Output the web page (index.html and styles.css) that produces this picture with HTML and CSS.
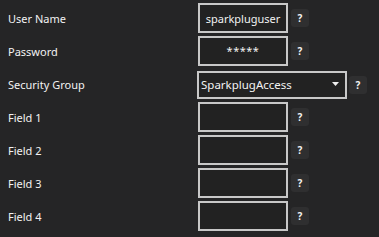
FILE: index.html
```html
<!DOCTYPE html>
<html>
<head>
<meta charset="utf-8">
<link rel="stylesheet" href="styles.css">
</head>
<body>
<div class="form">
  <div class="row">
    <div class="label">User Name</div>
    <div class="textbox">sparkpluguser</div>
    <div class="help">?</div>
  </div>
  <div class="row">
    <div class="label">Password</div>
    <div class="textbox pw">*****</div>
    <div class="help">?</div>
  </div>
  <div class="row">
    <div class="label">Security Group</div>
    <div class="select">
      <span class="select-text">SparkplugAccess</span>
      <svg class="arrow" width="7" height="4" viewBox="0 0 7 4"><path d="M0 0H7L3.5 4Z" fill="#f0f0f0"/></svg>
    </div>
    <div class="help help-sel">?</div>
  </div>
  <div class="row">
    <div class="label">Field 1</div>
    <div class="textbox"></div>
    <div class="help">?</div>
  </div>
  <div class="row">
    <div class="label">Field 2</div>
    <div class="textbox"></div>
    <div class="help">?</div>
  </div>
  <div class="row">
    <div class="label">Field 3</div>
    <div class="textbox"></div>
    <div class="help">?</div>
  </div>
  <div class="row">
    <div class="label">Field 4</div>
    <div class="textbox"></div>
    <div class="help">?</div>
  </div>
</div>
</body>
</html>
```

FILE: styles.css
```css
html, body {
  margin: 0;
  padding: 0;
  background: #252526;
}
body {
  font-family: "Noto Sans", "Open Sans", sans-serif;
  font-size: 11px;
  color: #f2f2f2;
  width: 379px;
  height: 237px;
  overflow: hidden;
}
.form {
  display: flex;
  flex-direction: column;
  gap: 3px;
  padding: 3px 0 0 8px;
}
.row {
  display: flex;
  align-items: center;
  height: 30px;
}
.label {
  width: 189px;
  flex: none;
}
.textbox {
  box-sizing: border-box;
  width: 90px;
  height: 30px;
  margin-left: 1px;
  border: 2px solid #c8c8c8;
  background: #222222;
  display: flex;
  align-items: center;
  justify-content: center;
  color: #f2f2f2;
}
.textbox.pw {
  align-items: flex-start;
  padding-top: 5px;
  font-size: 11px;
  letter-spacing: 0.5px;
}
.select {
  box-sizing: border-box;
  width: 150px;
  height: 28px;
  border: 2px solid #c8c8c8;
  background: #222222;
  display: flex;
  align-items: center;
  padding: 0 6px 0 2px;
  margin-top: 1px;
}
.select-text {
  flex: 1;
  font-size: 11.5px;
}
.arrow {
  display: block;
  margin-bottom: 1px;
}
.help {
  box-sizing: border-box;
  width: 18px;
  height: 18px;
  margin-left: 3px;
  border-radius: 3px;
  background: #2f2f30;
  font-family: "Noto Sans", sans-serif;
  font-weight: bold;
  font-size: 10px;
  display: flex;
  align-items: center;
  justify-content: center;
  color: #f2f2f2;
}
.help-sel {
  margin-left: 2px;
  margin-top: 1px;
}
```
